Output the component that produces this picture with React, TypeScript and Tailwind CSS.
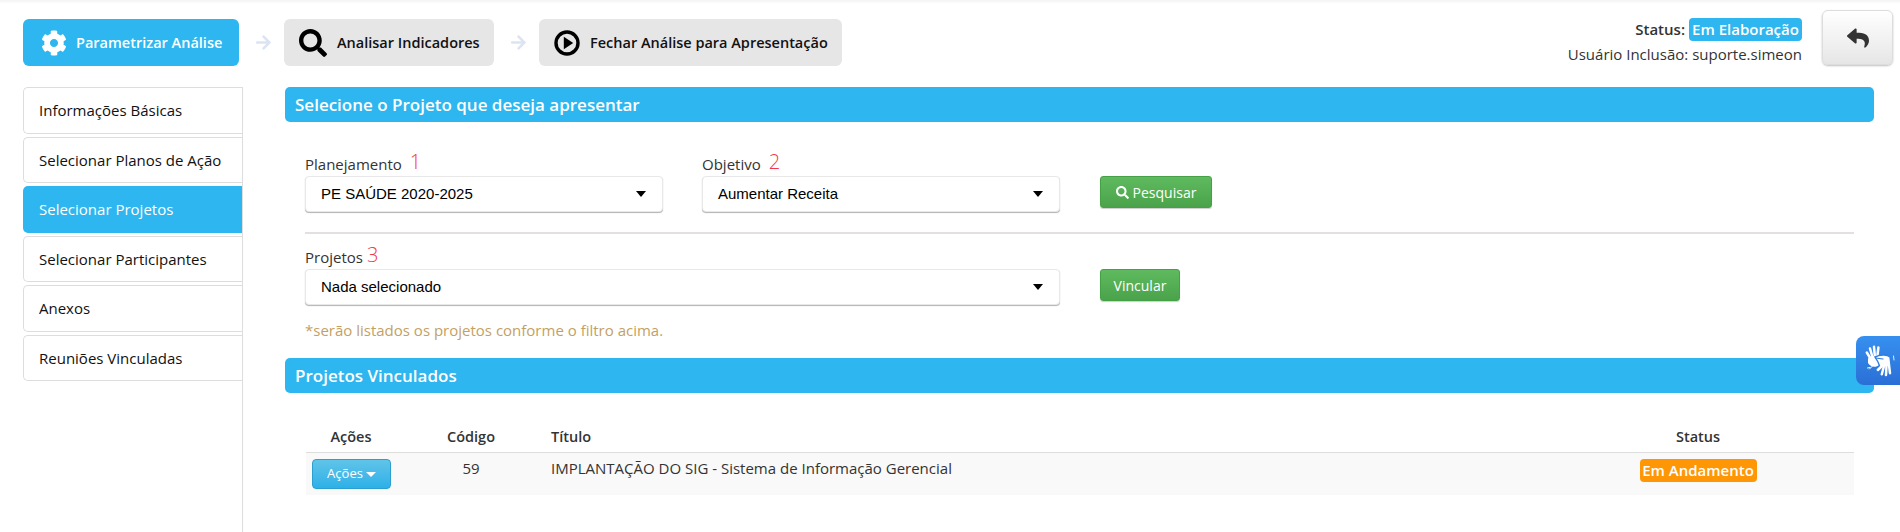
import { FaCog, FaSearch, FaReply, FaArrowRight } from "react-icons/fa";

const font = "font-['Open_Sans',sans-serif]";
const sideItems = [
  "Informações Básicas",
  "Selecionar Planos de Ação",
  "Selecionar Projetos",
  "Selecionar Participantes",
  "Anexos",
  "Reuniões Vinculadas",
];

function PlayIcon() {
  return (
    <svg width="26" height="26" viewBox="0 0 26 26" className="shrink-0">
      <circle cx="13" cy="13" r="11" fill="none" stroke="#000" strokeWidth="3.4" />
      <path d="M9.8 6.8 L19.2 13 L9.8 19.2 Z" fill="#000" />
    </svg>
  );
}

function HandsIcon() {
  return (
    <svg width="44" height="49" viewBox="0 0 44 49" fill="none" strokeLinecap="round">
      <g stroke="#fff" strokeWidth="2.5">
        <path d="M16 25 L10.8 16.5" />
        <path d="M17 23 L14 12.5" />
        <path d="M19 22 L18 10.8" />
        <path d="M21 23 L22.4 11.5" />
      </g>
      <path d="M12 23 C12 20 18 19 22 21 L23 29 C20 32 14 31 12 27 Z" fill="#fff" />
      <path d="M17.5 29 L13.5 33 M14 31.5 L11.5 32" stroke="#fff" strokeWidth="1" />
      <path d="M19 21 C23 19 31 18 34 21 L35 29 C33 31 27 32 24 31 L22 26 Z" fill="#fff" stroke="#2f7ee2" strokeWidth="1.4" />
      <path d="M19.5 22 L27 23" stroke="#2f7ee2" strokeWidth="1.2" />
      <g stroke="#fff" strokeWidth="2.5">
        <path d="M26 30 L21.8 34" />
        <path d="M28 30 L25.8 38.2" />
        <path d="M30.5 30 L30 39" />
        <path d="M33 29 L34 37.2" />
      </g>
      <path d="M37.5 20 L38 24" stroke="#dfeaff" strokeWidth="1" />
    </svg>
  );
}

function Arrow() {
  return (
    <div className="flex w-[45px] items-center justify-center pl-[3px]">
      <FaArrowRight className="text-[17px] text-[#dbe4f3]" />
    </div>
  );
}

function PanelTitle({ children }: { children: string }) {
  return (
    <div className="flex h-[35px] items-center rounded-[5px] bg-[#2db6ef] pl-[10px] text-[17px] font-semibold text-white">
      {children}
    </div>
  );
}

function Field({ label, num, gap, value, width }: { label: string; num: string; gap: string; value: string; width: string }) {
  return (
    <div className={width}>
      <div className="flex h-[25px] items-center text-[15px] leading-[20px] text-[#333]">
        <span>{label}</span>
        <span className={`${gap} -mt-[4px] text-[20px] leading-[24px] font-light text-[#f2384a]`}>{num}</span>
      </div>
      <div className="flex h-[36px] items-center justify-between rounded-[4px] border border-[#e8e8e8] bg-white pr-[16px] pl-[15px] font-['Liberation_Sans',sans-serif] text-[15px] text-black shadow-[0_1px_1px_rgba(0,0,0,0.3)]">
        <span>{value}</span>
        <span className="h-0 w-0 border-x-[5px] border-t-[6px] border-x-transparent border-t-black" />
      </div>
    </div>
  );
}

function GreenButton({ children, width }: { children: React.ReactNode; width: string }) {
  return (
    <div className={`${width} flex h-[32px] items-center justify-center gap-[4px] rounded-[3px] border border-[#46a046] bg-gradient-to-b from-[#5fba5f] to-[#4aa34a] text-[14px] text-white shadow-[0_1px_1px_rgba(0,0,0,0.2)]`}>
      {children}
    </div>
  );
}

export default function App() {
  return (
    <div className={`relative flex h-[532px] w-[1900px] flex-col overflow-hidden bg-white ${font} text-[15px] text-[#333]`}>
      <div className="absolute inset-x-0 top-0 h-[4px] bg-gradient-to-b from-[#f3f3f3] to-white" />

      <header className="relative flex h-[87px] items-start pt-[10px] pr-[7px] pl-[23px]">
        <div className="mt-[9px] flex text-[14.5px]">
          <div className="flex h-[47px] w-[216px] items-center gap-[9px] rounded-[6px] bg-[#2db6ef] pl-[18px] font-semibold text-white">
            <FaCog className="text-[26px]" />
            <span>Parametrizar Análise</span>
          </div>
          <Arrow />
          <div className="flex h-[47px] w-[210px] items-center gap-[10px] rounded-[6px] bg-[#e6e6e6] pl-[15px] font-semibold text-[#111]">
            <FaSearch className="text-[28px] text-black" />
            <span>Analisar Indicadores</span>
          </div>
          <Arrow />
          <div className="flex h-[47px] w-[303px] items-center gap-[10px] rounded-[6px] bg-[#e6e6e6] pl-[15px] font-semibold text-[#111]">
            <PlayIcon />
            <span>Fechar Análise para Apresentação</span>
          </div>
        </div>

        <div className="mt-[8px] ml-auto flex flex-col items-end">
          <div className="flex h-[23px] items-center gap-[4px]">
            <span className="font-semibold">Status:</span>
            <span className="flex h-[23px] w-[113px] items-center justify-center rounded-[4px] bg-[#2db6ef] font-semibold text-white">Em Elaboração</span>
          </div>
          <div className="mt-[3px] leading-[20px]">Usuário Inclusão: suporte.simeon</div>
        </div>

        <div className="ml-[20px] flex h-[55px] w-[71px] items-center justify-center rounded-[6px] border border-[#ddd] bg-gradient-to-b from-white to-[#e6e6e6] shadow-[0_1px_2px_rgba(0,0,0,0.25)]">
          <FaReply className="text-[22px] text-[#333]" />
        </div>
      </header>

      <div className="flex flex-1">
        <aside className="ml-[23px] flex w-[220px] flex-col gap-[3px] border-r border-[#ddd]">
          {sideItems.map((item) => (
            <div
              key={item}
              className={
                item === "Selecionar Projetos"
                  ? "flex h-[46.5px] items-center rounded-l-[5px] bg-[#2db6ef] pl-[16px] text-white"
                  : "flex h-[46.5px] items-center rounded-l-[5px] border-y border-l border-[#ddd] pl-[15px] text-[#111]"
              }
            >
              {item}
            </div>
          ))}
        </aside>

        <main className="ml-[42px] w-[1589px]">
          <PanelTitle>Selecione o Projeto que deseja apresentar</PanelTitle>

          <div className="mt-[29px] ml-[20px] flex items-start">
            <Field label="Planejamento" num="1" gap="ml-[8px]" value="PE SAÚDE 2020-2025" width="w-[358px]" />
            <div className="w-[39px]" />
            <Field label="Objetivo" num="2" gap="ml-[8px]" value="Aumentar Receita" width="w-[358px]" />
            <div className="w-[40px]" />
            <GreenButton width="mt-[25px] w-[112px]">
              <FaSearch className="text-[13px]" />
              <span>Pesquisar</span>
            </GreenButton>
          </div>

          <div className="mt-[20px] ml-[20px] h-[2px] w-[1549px] bg-[#e4dfe0]" />

          <div className="mt-[10px] ml-[20px] flex items-start gap-[40px]">
            <Field label="Projetos" num="3" gap="ml-[4px]" value="Nada selecionado" width="w-[755px]" />
            <GreenButton width="mt-[25px] w-[80px]">
              <span>Vincular</span>
            </GreenButton>
          </div>

          <p className="mt-[15px] ml-[20px] leading-[20px] text-[#c49f63]">*serão listados os projetos conforme o filtro acima.</p>

          <div className="mt-[18px]">
            <PanelTitle>Projetos Vinculados</PanelTitle>
          </div>

          <div className="mt-[29px] ml-[21px] w-[1548px]">
            <div className="grid h-[31px] grid-cols-[90px_150px_1fr_312px] items-center border-b border-[#ddd] text-[14.5px] font-semibold">
              <span className="text-center">Ações</span>
              <span className="text-center">Código</span>
              <span className="pl-[5px]">Título</span>
              <span className="text-center">Status</span>
            </div>
            <div className="grid h-[42px] grid-cols-[90px_150px_1fr_312px] bg-[#f9f9f9]">
              <div className="pt-[6px] pl-[6px]">
                <div className="flex h-[30px] w-[79px] items-center justify-center gap-[3px] rounded-[4px] border border-[#2a9fd0] bg-gradient-to-b from-[#5fc4e8] to-[#2bb0e8] text-[13px] text-white">
                  <span>Ações</span>
                  <span className="h-0 w-0 border-x-[5px] border-t-[5px] border-x-transparent border-t-white" />
                </div>
              </div>
              <span className="pt-[5px] text-center leading-[20px]">59</span>
              <span className="pt-[5px] pl-[5px] leading-[20px]">IMPLANTAÇÃO DO SIG - Sistema de Informação Gerencial</span>
              <div className="flex justify-center pt-[6px]">
                <span className="flex h-[23px] w-[117px] items-center justify-center rounded-[4px] bg-[#ff9605] font-semibold text-white">Em Andamento</span>
              </div>
            </div>
          </div>
        </main>
      </div>

      <div className="absolute top-[336px] right-0 h-[49px] w-[44px] rounded-l-[8px] bg-gradient-to-b from-[#3790f0] to-[#2a6fd6]">
        <HandsIcon />
      </div>
    </div>
  );
}
